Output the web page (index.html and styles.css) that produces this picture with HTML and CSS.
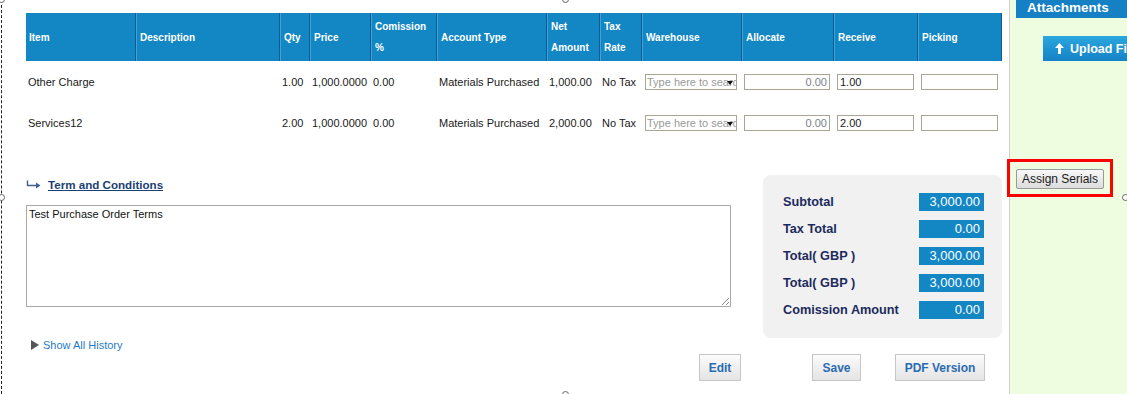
FILE: index.html
```html
<!DOCTYPE html>
<html>
<head>
<meta charset="utf-8">
<title>Purchase Order</title>
<link rel="stylesheet" href="styles.css">
</head>
<body>
<div class="frame">
  <div class="main">
    <table class="items">
      <thead>
        <tr>
          <th class="c-item">Item</th>
          <th class="c-desc">Description</th>
          <th class="c-qty">Qty</th>
          <th class="c-price">Price</th>
          <th class="c-com">Comission<br>%</th>
          <th class="c-acc">Account Type</th>
          <th class="c-net">Net<br>Amount</th>
          <th class="c-tax">Tax<br>Rate</th>
          <th class="c-wh">Warehouse</th>
          <th class="c-alloc">Allocate</th>
          <th class="c-rec">Receive</th>
          <th class="c-pick">Picking</th>
        </tr>
      </thead>
      <tbody>
        <tr>
          <td>Other Charge</td>
          <td></td>
          <td>1.00</td>
          <td>1,000.0000</td>
          <td>0.00</td>
          <td>Materials Purchased</td>
          <td>1,000.00</td>
          <td>No Tax</td>
          <td><div class="combo"><span class="ph">Type here to search</span><span class="caret"></span></div></td>
          <td><div class="field w-alloc num">0.00</div></td>
          <td><div class="field w-rec">1.00</div></td>
          <td><div class="field w-pick"></div></td>
        </tr>
        <tr>
          <td>Services12</td>
          <td></td>
          <td>2.00</td>
          <td>1,000.0000</td>
          <td>0.00</td>
          <td>Materials Purchased</td>
          <td>2,000.00</td>
          <td>No Tax</td>
          <td><div class="combo"><span class="ph">Type here to search</span><span class="caret"></span></div></td>
          <td><div class="field w-alloc num">0.00</div></td>
          <td><div class="field w-rec">2.00</div></td>
          <td><div class="field w-pick"></div></td>
        </tr>
      </tbody>
    </table>

    <div class="lower">
      <div class="left-col">
        <div class="terms-head">
          <svg class="terms-arrow" width="15" height="9" viewBox="0 0 15 9"><path d="M1.5 0.5 V5.5 H11" fill="none" stroke="#3f5f8f" stroke-width="1.4"/><path d="M10 2.5 L14.5 5.5 L10 8.5 Z" fill="#3f5f8f"/></svg>
          <a class="terms-link">Term and Conditions</a>
        </div>
        <div class="terms-box">Test Purchase Order Terms<span class="grip"></span></div>
        <div class="history"><span class="tri"></span><a class="history-link">Show All History</a></div>
      </div>
      <div class="totals">
        <div class="t-row"><span class="t-label">Subtotal</span><span class="t-val">3,000.00</span></div>
        <div class="t-row"><span class="t-label">Tax Total</span><span class="t-val">0.00</span></div>
        <div class="t-row"><span class="t-label">Total( GBP )</span><span class="t-val">3,000.00</span></div>
        <div class="t-row"><span class="t-label">Total( GBP )</span><span class="t-val">3,000.00</span></div>
        <div class="t-row"><span class="t-label">Comission Amount</span><span class="t-val">0.00</span></div>
      </div>
    </div>

    <div class="actions">
      <button class="btn b-edit">Edit</button>
      <button class="btn b-save">Save</button>
      <button class="btn b-pdf">PDF Version</button>
    </div>
  </div>

  <aside class="side">
    <div class="att-head">Attachments</div>
    <button class="upload"><svg width="9" height="11" viewBox="0 0 9 11"><path d="M4.5 0 L9 5 H6 V11 H3 V5 H0 Z" fill="#fff"/></svg><span>Upload File</span></button>
    <button class="assign">Assign Serials</button>
  </aside>

  <div class="sel-line"></div>
  <span class="handle h-tl"></span>
  <span class="handle h-tc"></span>
  <span class="handle h-ml"></span>
  <span class="handle h-mr"></span>
  <span class="handle h-bc"></span>
  <div class="highlight"></div>
</div>
</body>
</html>
```

FILE: styles.css
```css
* { box-sizing: border-box; }
html, body { margin: 0; padding: 0; background: #fff; }
body { font-family: "Liberation Sans", Arial, sans-serif; font-size: 11px; color: #1a1a1a; }

.frame {
  position: relative;
  width: 1127px;
  height: 394px;
  overflow: hidden;
  display: flex;
}

.main {
  width: 1010px;
  flex: none;
  padding: 13px 0 0 26px;
  border-right: 1px solid #cfcfcf;
}

/* table */
.items {
  border-collapse: separate;
  border-spacing: 0;
  table-layout: fixed;
  width: 976px;
}
.items th {
  background: #1386c4;
  color: #fff;
  font-weight: bold;
  font-size: 10px;
  text-align: left;
  height: 48px;
  line-height: 21px;
  padding: 0 0 0 3px;
  vertical-align: middle;
  border-left: 1px solid #3ea3dc;
  border-right: 1px solid #0d5a92;
}
.items th.c-item { border-left: none; padding-left: 3px; }
.c-item { width: 110px; }
.c-desc { width: 144px; }
.c-qty { width: 30px; }
.c-price { width: 61px; }
.c-com { width: 66px; }
.c-acc { width: 110px; }
.c-net { width: 53px; }
.c-tax { width: 42px; }
.c-wh { width: 100px; }
.c-alloc { width: 92px; }
.c-rec { width: 84px; }
.c-pick { width: 84px; }

.items td {
  height: 41px;
  padding: 0 0 0 2px;
  vertical-align: middle;
  white-space: nowrap;
  overflow: hidden;
  font-size: 11px;
  color: #1a1a1a;
}

.combo {
  position: relative;
  width: 92px;
  height: 16px;
  margin-left: 1px;
  border: 1px solid #a9a596;
  background: #fff;
  overflow: hidden;
  white-space: nowrap;
  line-height: 14px;
  padding-left: 1px;
}
.combo .ph { color: #9a9a9a; font-size: 11px; }
.combo .caret {
  position: absolute;
  right: 3px;
  top: 6px;
  width: 0; height: 0;
  border-left: 3px solid transparent;
  border-right: 3px solid transparent;
  border-top: 4px solid #111;
}

.field {
  height: 16px;
  border: 1px solid #a9a596;
  background: #fff;
  line-height: 14px;
  padding: 0 2px;
  font-size: 11px;
  color: #1a1a1a;
}
.field.num { text-align: right; color: #7a7f8a; }
.w-alloc { width: 86px; margin-left: 0; }
.w-rec { width: 77px; margin-left: 1px; }
.w-pick { width: 77px; margin-left: 1px; }

/* lower */
.lower { display: flex; }
.left-col { width: 705px; flex: none; }
.terms-head {
  margin-top: 33px;
  height: 16px;
  display: flex;
  align-items: center;
  padding-left: 0;
}
.terms-arrow { margin-right: 7px; }
.terms-link {
  font-weight: bold;
  font-size: 11.6px;
  color: #1b3f73;
  text-decoration: underline;
}
.terms-box {
  position: relative;
  margin-top: 13px;
  height: 102px;
  border: 1px solid #a9a9a9;
  padding: 2px 2px;
  font-size: 11px;
  color: #111;
}
.grip {
  position: absolute;
  right: 1px;
  bottom: 1px;
  width: 7px;
  height: 7px;
  background: linear-gradient(135deg, transparent 45%, #888 45%, #888 55%, transparent 55%, transparent 75%, #888 75%, #888 85%, transparent 85%);
}
.history {
  margin-top: 30px;
  height: 16px;
  display: flex;
  align-items: center;
  padding-left: 5px;
}
.tri {
  width: 0; height: 0;
  border-top: 5px solid transparent;
  border-bottom: 5px solid transparent;
  border-left: 8px solid #555;
  margin-right: 4px;
}
.history-link { color: #1f7bc7; font-size: 11px; }

.totals {
  margin-top: 32px;
  margin-left: 32px;
  width: 239px;
  height: 163px;
  background: #f1f1f1;
  border-radius: 8px;
  padding: 18px 18px 0 20px;
}
.t-row {
  display: flex;
  justify-content: space-between;
  align-items: center;
  height: 18px;
  margin-bottom: 9px;
}
.t-label { font-weight: bold; font-size: 12.7px; color: #1c2a5c; }
.t-val {
  width: 65px;
  height: 18px;
  background: #1386c4;
  color: #fff;
  font-size: 13px;
  text-align: right;
  line-height: 18px;
  padding-right: 4px;
}

/* actions */
.actions {
  display: flex;
  margin-top: 1px;
  padding-left: 673px;
}
.btn {
  height: 27px;
  border: 1px solid #c6c6c6;
  background: linear-gradient(#fbfbfb, #e4e4e4);
  color: #2a6cb2;
  font-family: "Liberation Sans", Arial, sans-serif;
  font-weight: bold;
  font-size: 12px;
  padding: 0;
}
.b-edit { width: 42px; }
.b-save { width: 49px; margin-left: 71px; }
.b-pdf { width: 90px; margin-left: 34px; }

/* side */
.side {
  flex: 1;
  background: #eefde0;
  display: flex;
  flex-direction: column;
  align-items: flex-start;
}
.att-head {
  margin-left: 6px;
  width: 130px;
  height: 18px;
  background: #1580c3;
  color: #fff;
  font-weight: bold;
  font-size: 13.5px;
  line-height: 15px;
  padding-left: 11px;
}
.upload {
  margin-top: 18px;
  margin-left: 33px;
  width: 110px;
  height: 25px;
  border: none;
  background: linear-gradient(#2aa7e0, #1582c6);
  color: #fff;
  font-family: "Liberation Sans", Arial, sans-serif;
  font-weight: bold;
  font-size: 12.5px;
  display: flex;
  align-items: center;
  padding-left: 12px;
}
.upload svg { margin-right: 6px; }
.assign {
  margin-top: 108px;
  margin-left: 6px;
  width: 88px;
  height: 20px;
  border: 1px solid #9a9a9a;
  border-radius: 2px;
  background: linear-gradient(#f9f9f9, #dcdcdc);
  color: #1a1a1a;
  font-family: "Liberation Sans", Arial, sans-serif;
  font-size: 12px;
  padding: 0;
}

/* overlays */
.highlight {
  position: absolute;
  left: 1007px;
  top: 159px;
  width: 106px;
  height: 38px;
  border: 3px solid #ff0000;
}
.sel-line {
  position: absolute;
  left: 1px;
  top: 0;
  height: 394px;
  border-left: 1px dashed #222;
}
.handle {
  position: absolute;
  width: 7px;
  height: 7px;
  border: 1px solid #666;
  border-radius: 50%;
  background: #fff;
}
.h-tl { left: -2px; top: -4px; }
.h-tc { left: 562px; top: -4px; }
.h-ml { left: -2px; top: 194px; }
.h-mr { left: 1122px; top: 194px; }
.h-bc { left: 562px; top: 391px; }
```
